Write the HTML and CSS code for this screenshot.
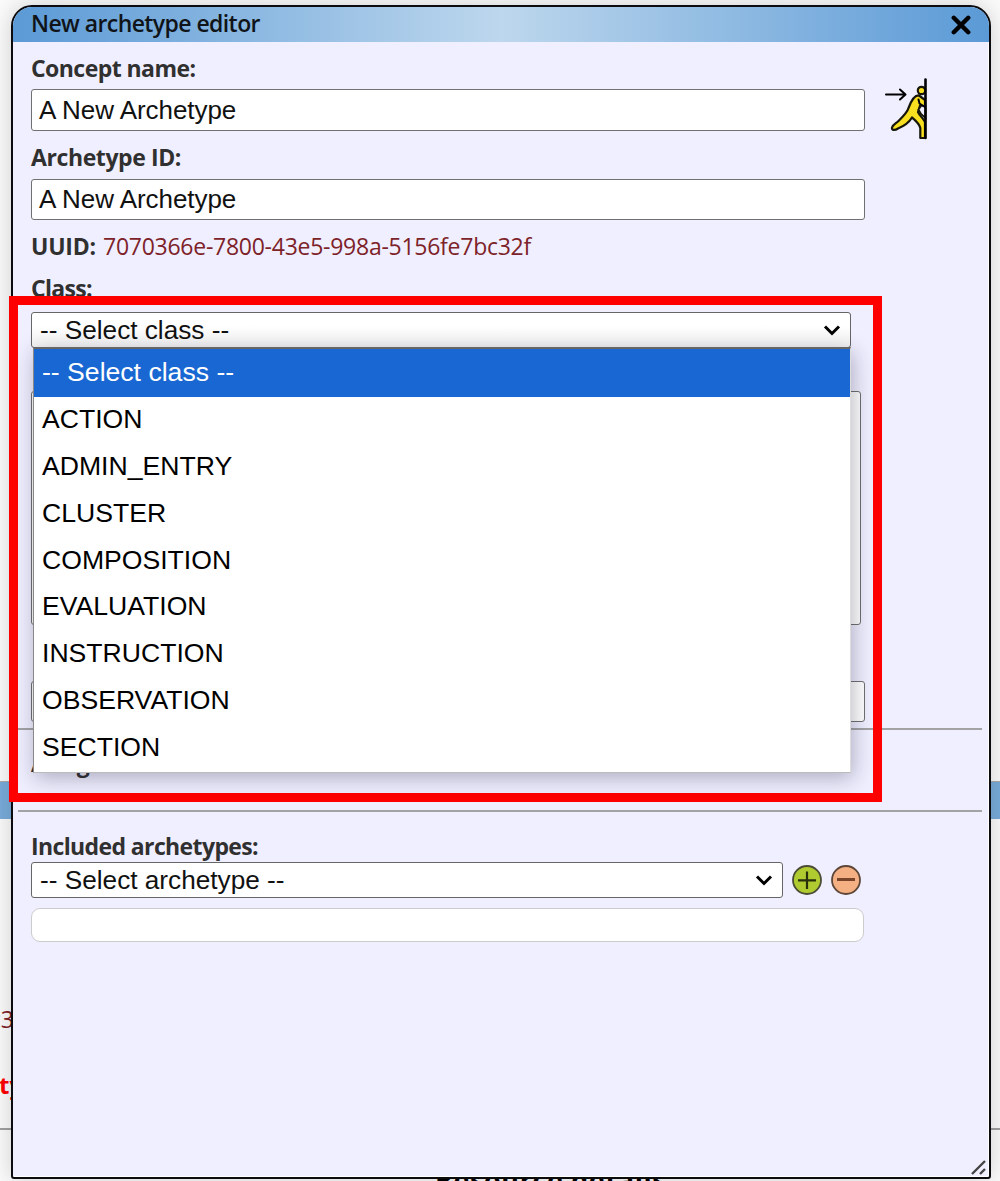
FILE: index.html
```html
<!DOCTYPE html>
<html lang="en">
<head>
<meta charset="utf-8">
<title>New archetype editor</title>
<link rel="stylesheet" href="styles.css">
</head>
<body>
<div class="backdrop">
  <div class="band"></div>
  <span class="behind behind-id">c3</span>
  <span class="behind behind-type">ty</span>
  <div class="rule-behind"></div>
  <span class="behind behind-footer">Resource details</span>
</div>
<section class="dialog">
  <header class="titlebar">
    <h1 class="title">New archetype editor</h1>
    <svg class="close" viewBox="0 0 18 18"><path d="M2.500 2.500 15.500 15.500M15.500 2.500 2.500 15.500"/></svg>
  </header>
  <form class="body">
    <div class="top">
      <div class="fields">
        <label class="label concept">Concept name:</label>
        <div class="input first">A New Archetype</div>
        <label class="label archid">Archetype ID:</label>
        <div class="input second">A New Archetype</div>
      </div>
      <svg class="exit" viewBox="0 0 44 62">
        <path class="arrow" d="M1 16.500H20M15 11.500 20.500 16.500 15 21.500"/>
        <circle class="skin" cx="36.500" cy="12.500" r="3.700"/>
        <path class="skin" d="M34 17.500C29.500 17 26.500 22 23.500 30C22.500 34 18 38.500 14 42.500C11 45.500 8 46.500 7 49.500C6.500 52.500 10 52.500 13 50.500C18 48.500 24 44.500 27 39.500C31 43 34.500 46 35.300 50V60H40V44C38 40 34.500 37.500 33 34L35 27.500L36.500 32.500L40 34V22Z"/>
        <path class="gap" d="M40.500 29 36.500 27.500 33.500 31.500 36 36 40.500 40Z"/>
        <path class="arm" d="M33.500 21.500 34.500 25.500 40 29"/>
        <path class="door" d="M40.500 1.500V60"/>
      </svg>
    </div>
    <div class="uuid"><span class="label uuid-label">UUID:</span><span class="uuid-value">7070366e-7800-43e5-998a-5156fe7bc32f</span></div>
    <label class="label class-label">Class:</label>
    <div class="select-wrap">
      <div class="select class-select"><span>-- Select class --</span>
        <svg class="chev" viewBox="0 0 18 12"><path d="M2 2.500 9 9.500 16 2.500"/></svg></div>
      <ul class="options">
        <li class="option chosen">-- Select class --</li>
        <li class="option">ACTION</li>
        <li class="option">ADMIN_ENTRY</li>
        <li class="option">CLUSTER</li>
        <li class="option">COMPOSITION</li>
        <li class="option">EVALUATION</li>
        <li class="option">INSTRUCTION</li>
        <li class="option">OBSERVATION</li>
        <li class="option">SECTION</li>
      </ul>
    </div>
    <div class="textarea"></div>
    <div class="input third"></div>
    <hr class="rule">
    <div class="label assign">Assign</div>
    <hr class="rule">
    <label class="label included">Included archetypes:</label>
    <div class="picker">
      <div class="select"><span>-- Select archetype --</span>
        <svg class="chev" viewBox="0 0 18 12"><path d="M2 2.500 9 9.500 16 2.500"/></svg></div>
      <svg class="round add" viewBox="0 0 30 30"><circle cx="15" cy="15" r="14"/><path d="M6 15.300H24M15 6.500V24"/></svg>
      <svg class="round remove" viewBox="0 0 30 30"><circle cx="15" cy="15" r="14"/><path d="M6 14.500H24"/></svg>
    </div>
    <div class="list"></div>
  </form>
  <svg class="grip" viewBox="0 0 17 17"><path d="M2 15 15 2M10 15 15 10"/></svg>
</section>
<div class="highlight"></div>
</body>
</html>
```
FILE: styles.css
```css
* { box-sizing: border-box; }
body {
  margin: 0;
  width: 1000px;
  height: 1181px;
  position: relative;
  overflow: hidden;
  background: #fbfbfb;
  color: #000;
  font-family: "Open Sans", sans-serif;
}
.backdrop { position: absolute; inset: 0; overflow: hidden; }
.band {
  position: absolute; left: 0; right: 0; top: 781px; height: 38px;
  background: #79acdb; border-top: 1px solid #aaa;
}
.rule-behind {
  position: absolute; left: 0; right: 0; top: 1128px; height: 2px; background: #a0a0a0;
}
.behind { position: absolute; white-space: nowrap; line-height: 30px; }
.behind-id { right: 986px; top: 1004px; font-size: 23px; color: #7d2228; }
.behind-type { left: -1px; top: 1070px; font-size: 24px; font-weight: 700; color: #f00; }
.behind-footer { left: 435px; top: 1163px; font-size: 27px; font-weight: 700; line-height: 34px; letter-spacing: .6px; }

.dialog {
  position: absolute; left: 11px; top: 5px; width: 980px; height: 1174px;
  border: 2px solid #0b0b10;
  border-radius: 21px 21px 3px 3px;
  background: #f0efff;
  box-shadow: 0 0 24px rgba(0, 0, 0, .18), inset -1px -1px 0 #fff;
  overflow: clip;
}
.titlebar {
  display: flex; align-items: center; justify-content: space-between;
  height: 35px; padding: 0 18px 2px 18px;
  background: linear-gradient(90deg, #5b9ad6, #bdd7ed 50%, #5b9ad6);
}
.title { margin: -2px 0 0; font-size: 23px; font-weight: 600; line-height: 32px; letter-spacing: -.58px; color: #101418; }
.close { width: 20px; height: 20px; margin-top: 2px; }
.close path { stroke: #000; stroke-width: 4; stroke-linecap: round; }
.body { margin: 0; }
.top { display: flex; gap: 20px; padding-left: 18px; }
.fields { width: 834px; }
.label { display: block; font-size: 23px; font-weight: 700; color: #303030; line-height: 30px; white-space: nowrap; }
.concept { height: 47px; padding-top: 11px; letter-spacing: -.55px; }
.archid { height: 48px; padding-top: 11px; letter-spacing: -.4px; }
.input {
  border: 1px solid #707070; border-radius: 3px; background: #fff;
  font-family: "Liberation Sans", sans-serif; font-size: 26px; color: #111;
  padding-left: 7px; white-space: nowrap; letter-spacing: -.05px;
}
.first { height: 42px; line-height: 40px; }
.second { height: 41px; line-height: 38px; }
.exit { width: 44px; height: 62px; margin-top: 36px; fill: none; }
.arrow, .door, .arm { stroke: #000; stroke-width: 2; stroke-linecap: round; stroke-linejoin: round; }
.door { stroke-width: 2.6; }
.skin { fill: #f8df20; stroke: #16160a; stroke-width: 2.2; stroke-linejoin: round; }
.gap { fill: #f0efff; stroke: #16160a; stroke-width: 1.8; }
.uuid { display: flex; height: 53px; padding: 11px 0 0 18px; }
.uuid-label { width: 72px; letter-spacing: -.2px; }
.uuid-value { font-size: 23px; line-height: 30px; color: #7d2228; letter-spacing: -.26px; white-space: nowrap; }
.class-label { height: 39px; padding-left: 18px; letter-spacing: -.7px; }
.select-wrap { position: relative; width: 820px; margin-left: 18px; }
.select {
  display: flex; align-items: center; justify-content: space-between;
  width: 752px; height: 36px; padding: 0 9px 0 8px;
  border: 1px solid #666; border-radius: 3px; background: #fff;
  font-family: "Liberation Sans", sans-serif; font-size: 26.200px; color: #111; white-space: nowrap;
}
.class-select { width: 820px; background: linear-gradient(#fff 35%, #f3f3f3); }
.chev { width: 18px; height: 12px; fill: none; stroke: #000; stroke-width: 3; }
.options {
  position: absolute; z-index: 2; left: 2px; top: 35px; width: 818px; height: 426px;
  margin: 0; padding: 0; list-style: none; background: #fff;
  border: 1px solid #888; border-top: 2px solid #666; border-right-color: #ddd; border-bottom-color: #bbb;
  box-shadow: 2px 5px 20px rgba(30, 30, 60, .32);
  font-family: "Liberation Sans", sans-serif; font-size: 26.600px;
}
.option { height: 46.850px; line-height: 44px; padding-left: 8px; white-space: nowrap; }
.chosen { background: #1967d2; color: #fff; height: 48px; line-height: 46px; }
.textarea {
  width: 830px; height: 234px; margin: 43px 0 0 18px;
  border: 1px solid #707070; border-radius: 3px; background: #fff;
}
.third { width: 834px; height: 41px; margin: 56px 0 0 18px; }
.rule { height: 2px; border: 0; margin: 6px 7px 0 5px; background: #a3a3a5; }
.assign { height: 80px; padding: 18px 0 0 18px; }
.assign + .rule { margin-top: 0; }
.included { height: 50px; padding: 19px 0 0 18px; letter-spacing: -.62px; }
.picker { display: flex; align-items: center; gap: 9px; margin-left: 18px; }
.round { width: 30px; height: 30px; }
.round circle { fill: #b0cb30; stroke: #4b4b36; stroke-width: 1.800; }
.round path { stroke: #29300c; stroke-width: 2.200; }
.remove circle { fill: #f4af82; stroke: #5d4638; }
.remove path { stroke: #79452a; stroke-width: 3; }
.list { width: 833px; height: 34px; margin: 10px 0 0 18px; border: 1px solid #ccc; border-radius: 9px; background: #fff; }
.grip { position: absolute; right: 2px; bottom: 1px; width: 17px; height: 17px; stroke: #444; stroke-width: 2.400; }
.highlight { position: absolute; left: 9px; top: 296px; width: 873px; height: 506px; border: 9px solid #f00; }
```
